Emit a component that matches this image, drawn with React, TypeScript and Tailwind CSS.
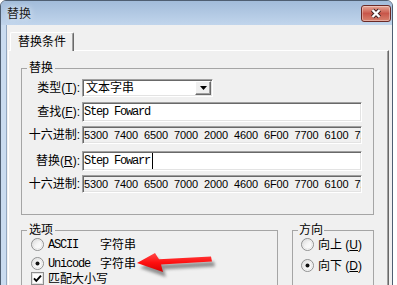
import type { ReactNode } from "react";

const ui = "font-['Liberation_Sans','Noto_Sans_CJK_SC',sans-serif] text-[12px] text-black";
const mono = "font-['Liberation_Mono',monospace] text-[12px] tracking-[-1.2px]";
const sunken =
  "border border-t-[#a0a0a0] border-l-[#a0a0a0] border-r-white border-b-white shadow-[inset_1px_1px_0_#696969,inset_-1px_-1px_0_#e3e3e3]";

function Radio({ checked }: { checked?: boolean }) {
  return (
    <svg width="13" height="13" viewBox="0 0 13 13" className="shrink-0">
      <defs>
        <linearGradient id="rb" x1="0" y1="0" x2="1" y2="1">
          <stop offset="0" stopColor="#d8d8d8" />
          <stop offset="0.5" stopColor="#f6f6f6" />
          <stop offset="1" stopColor="#ffffff" />
        </linearGradient>
      </defs>
      <circle cx="6.5" cy="6.5" r="6" fill="url(#rb)" stroke="#8f9090" />
      <circle cx="6.5" cy="6.5" r="4.5" fill="none" stroke="#e6e6e6" />
      {checked && <circle cx="6.5" cy="6.5" r="2" fill="#111" />}
    </svg>
  );
}

function Check() {
  return (
    <svg width="13" height="13" viewBox="0 0 13 13" className="shrink-0">
      <rect x="0.5" y="0.5" width="12" height="12" fill="#fff" stroke="#8f8f8f" />
      <rect x="1.5" y="1.5" width="10" height="10" fill="none" stroke="#e4e4e4" />
      <path d="M3 6.3 L5.3 8.8 L10 3.6" fill="none" stroke="#000" strokeWidth="1.9" />
    </svg>
  );
}

function Row({ label, className, children }: { label: ReactNode; className: string; children: ReactNode }) {
  return (
    <div className={`flex items-center ${className}`}>
      <div className="w-[58px] text-right leading-[16px]">{label}</div>
      {children}
    </div>
  );
}

function Hex() {
  return (
    <div
      className={`ml-[2px] flex h-[18px] w-[280px] items-center overflow-hidden whitespace-pre bg-[#f0f0f0] pl-[1px] font-['Liberation_Sans',sans-serif] text-[11px] tracking-[-0.1px] ${sunken}`}
    >
      {"5300  7400  6500  7000  2000  4600  6F00  7700  6100  7200  6400"}
    </div>
  );
}

function Arrow() {
  const pts = "7,18 25,8 29,14.3 81,11.5 82,16.5 31,19.5 33,27";
  return (
    <svg className="absolute left-[130px] top-[245px]" width="95" height="40" viewBox="0 0 95 40">
      <defs>
        <filter id="blur" x="-20%" y="-50%" width="140%" height="200%">
          <feGaussianBlur stdDeviation="1.6" />
        </filter>
        <linearGradient id="red" x1="0" y1="0" x2="0" y2="1">
          <stop offset="0" stopColor="#ff4a4a" />
          <stop offset="0.5" stopColor="#ff1010" />
          <stop offset="1" stopColor="#d80000" />
        </linearGradient>
      </defs>
      <polygon points={pts} fill="#444" opacity="0.55" transform="translate(3 5)" filter="url(#blur)" />
      <polygon points={pts} fill="url(#red)" />
    </svg>
  );
}

export default function App() {
  return (
    <div className={`relative h-[285px] w-[397px] overflow-hidden bg-white ${ui}`}>
      <div className="flex h-[300px] w-[393px] flex-col overflow-hidden rounded-t-[6px] border border-[#4f5f72] bg-[#c6d9ee]">
        {/* title bar */}
        <div className="flex h-[24px] shrink-0 items-start justify-between bg-linear-to-b from-[#a2bcda] to-[#c1d5ec]">
          <div className="flex h-full items-center pl-[6px] pt-[2px] text-[12px] text-[#1b1b1b] [text-shadow:0_0_6px_rgba(255,255,255,0.9)]">
            替换
          </div>
          <div className="mr-[1px] mt-[4px] flex h-[17px] w-[30px] items-center justify-center rounded-[3px] border border-[#6b2a26] bg-linear-to-b from-[#e6a898] via-[#c8564a] to-[#d8826f] shadow-[inset_0_0_0_1px_rgba(255,255,255,0.35)]">
            <svg width="14" height="11" viewBox="0 0 14 11">
              <path d="M3.5 2 L10.5 9 M10.5 2 L3.5 9" stroke="#3e2020" strokeWidth="4.2" />
              <path d="M3.5 2 L10.5 9 M10.5 2 L3.5 9" stroke="#fff" strokeWidth="2.4" />
            </svg>
          </div>
        </div>

        <div className="flex flex-1">
          <div className="w-[6px] border-r border-[#93a8c1] bg-[#cadcf0]" />
          <div className="flex flex-1 flex-col bg-[#f0f0f0] pt-[7px]">
            {/* tab */}
            <div className="relative z-10 -mb-[1px] flex pl-[3px]">
              <div className="flex h-[19px] w-[64px] items-center justify-center rounded-t-[2px] border-l border-t border-r border-l-white border-t-white border-r-[#696969] bg-[#f0f0f0] shadow-[inset_-1px_0_0_#a0a0a0]">
                替换条件
              </div>
            </div>

            {/* tab pane */}
            <div className="ml-[1px] w-[381px] flex-1 border-l border-r border-t border-l-white border-t-white border-r-[#696969] shadow-[inset_-1px_0_0_#a0a0a0]">
              <fieldset className="ml-[12px] mt-[9px] w-[353px] border border-[#a5a5a5] pb-[21px]">
                <legend className="ml-[5px] px-[2px] leading-[16px]">替换</legend>

                <Row label={<>类型(<u>T</u>):</>} className="mt-[3px] h-[18px]">
                  <div className={`ml-[2px] flex h-[18px] w-[131px] bg-white p-[1px] ${sunken}`}>
                    <div className="flex-1 pl-[2px] leading-[14px]">文本字串</div>
                    <div className="flex w-[16px] items-center justify-center border border-l-white border-t-white border-r-[#696969] border-b-[#696969] bg-[#f0f0f0] shadow-[inset_-1px_-1px_0_#a0a0a0]">
                      <svg width="7" height="4" viewBox="0 0 7 4">
                        <path d="M0 0H7L3.5 4Z" fill="#000" />
                      </svg>
                    </div>
                  </div>
                </Row>

                <Row label={<>查找(<u>F</u>):</>} className="mt-[5px] h-[20px]">
                  <div className={`ml-[2px] flex h-[20px] w-[280px] items-center bg-white pl-[1px] ${mono} ${sunken}`}>
                    Step Foward
                  </div>
                </Row>

                <Row label="十六进制:" className="mt-[4px] h-[18px]">
                  <Hex />
                </Row>

                <Row label={<>替换(<u>R</u>):</>} className="mt-[7px] h-[20px]">
                  <div className={`ml-[2px] flex h-[20px] w-[280px] items-center bg-white pl-[1px] ${mono} ${sunken}`}>
                    <span>Step Fowarr</span>
                    <span className="ml-[2px] inline-block h-[16px] w-px bg-black" />
                  </div>
                </Row>

                <Row label="十六进制:" className="mt-[4px] h-[18px]">
                  <Hex />
                </Row>
              </fieldset>

              <div className="ml-[12px] mt-[7px] flex gap-[14px]">
                <fieldset className="h-[80px] w-[257px] border border-[#a5a5a5]">
                  <legend className="ml-[5px] px-[2px] leading-[16px]">选项</legend>
                  <div className="flex h-[13px] items-center gap-[4px] pl-[9px]">
                    <Radio />
                    <span className={`whitespace-pre ${mono}`}>{"ASCII   "}</span>
                    <span>字符串</span>
                  </div>
                  <div className="mt-[6px] flex h-[13px] items-center gap-[4px] pl-[9px]">
                    <Radio checked />
                    <span className={`whitespace-pre ${mono}`}>{"Unicode "}</span>
                    <span>字符串</span>
                  </div>
                  <div className="mt-[2px] flex h-[13px] items-center gap-[4px] pl-[9px]">
                    <Check />
                    <span>匹配大小写</span>
                  </div>
                </fieldset>

                <fieldset className="h-[80px] w-[82px] border border-[#a5a5a5]">
                  <legend className="ml-[5px] px-[1px] leading-[16px]">方向</legend>
                  <div className="flex h-[13px] items-center gap-[4px] pl-[8px]">
                    <Radio />
                    <span className="whitespace-pre">
                      向上 (<u>U</u>)
                    </span>
                  </div>
                  <div className="mt-[8px] flex h-[13px] items-center gap-[4px] pl-[8px]">
                    <Radio checked />
                    <span className="whitespace-pre">
                      向下 (<u>D</u>)
                    </span>
                  </div>
                </fieldset>
              </div>
            </div>
          </div>
        </div>
      </div>
      <Arrow />
    </div>
  );
}
